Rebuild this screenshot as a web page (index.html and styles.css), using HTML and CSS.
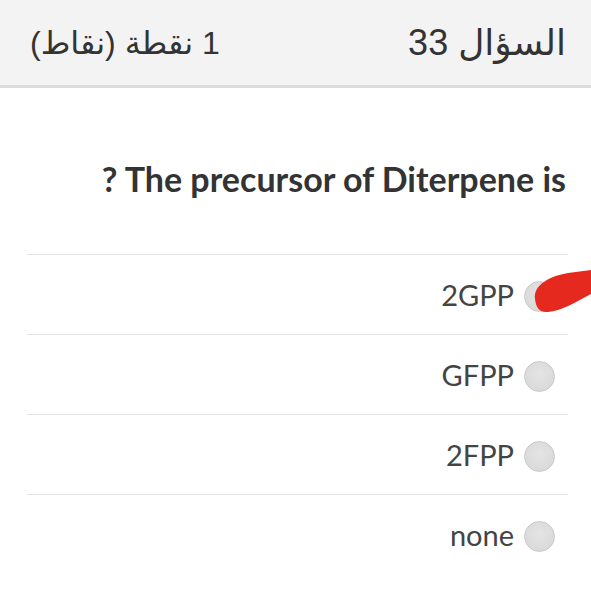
FILE: index.html
```html
<!DOCTYPE html>
<html lang="ar">
<head>
<meta charset="utf-8">
<link rel="stylesheet" href="styles.css">
</head>
<body>
<div class="page">
  <header class="head" dir="rtl">
    <span class="qnum">السؤال 33</span>
    <span class="points">1 نقطة (نقاط)</span>
  </header>
  <div class="question">? The precursor of Diterpene is</div>
  <ul class="options">
    <li class="opt"><span class="label">2GPP</span><span class="radio"></span></li>
    <li class="opt"><span class="label">GFPP</span><span class="radio"></span></li>
    <li class="opt"><span class="label">2FPP</span><span class="radio"></span></li>
    <li class="opt"><span class="label">none</span><span class="radio"></span></li>
  </ul>
  <svg class="mark" width="71" height="56" viewBox="0 0 71 56">
    <path d="M15 35 C13 21 30 12 48 9 L71 6 L71 30 C56 38 41 47 28 48 C19 49 16 43 15 35 Z" fill="#e5291f"/>
  </svg>
</div>
</body>
</html>
```
FILE: styles.css
```css
html, body {
  margin: 0;
  padding: 0;
  background: #ffffff;
}
.page {
  position: relative;
  width: 591px;
  height: 606px;
  overflow: hidden;
  font-family: Lato, "DejaVu Sans", sans-serif;
}
.head {
  height: 88px;
  box-sizing: border-box;
  background: #f3f3f3;
  border-bottom: 3px solid #dcdcdc;
  display: flex;
  justify-content: space-between;
  align-items: center;
  padding: 0 25px 0 30px;
  font-family: "Liberation Sans", "DejaVu Sans", sans-serif;
  color: #333333;
}
.qnum {
  font-size: 36px;
}
.points {
  font-size: 32px;
}
.question {
  margin-top: 71px;
  padding-right: 25px;
  text-align: right;
  font-size: 34px;
  line-height: 40px;
  font-weight: 700;
  color: #333333;
}
.options {
  list-style: none;
  margin: 55px 23px 0 27px;
  padding: 0;
}
.opt {
  height: 80px;
  box-sizing: border-box;
  border-top: 1px solid #e3e3e3;
  display: flex;
  justify-content: flex-end;
  align-items: center;
  gap: 10px;
  padding-right: 13px;
}
.label {
  font-size: 29px;
  font-weight: 400;
  color: #444444;
}
.radio {
  width: 31px;
  height: 31px;
  box-sizing: border-box;
  border-radius: 50%;
  border: 1px solid #c9c9c9;
  background: radial-gradient(circle at 50% 40%, #e4e4e4 0%, #d6d6d6 100%);
  margin-top: 4px;
}
.mark {
  position: absolute;
  left: 520px;
  top: 264px;
}
```
